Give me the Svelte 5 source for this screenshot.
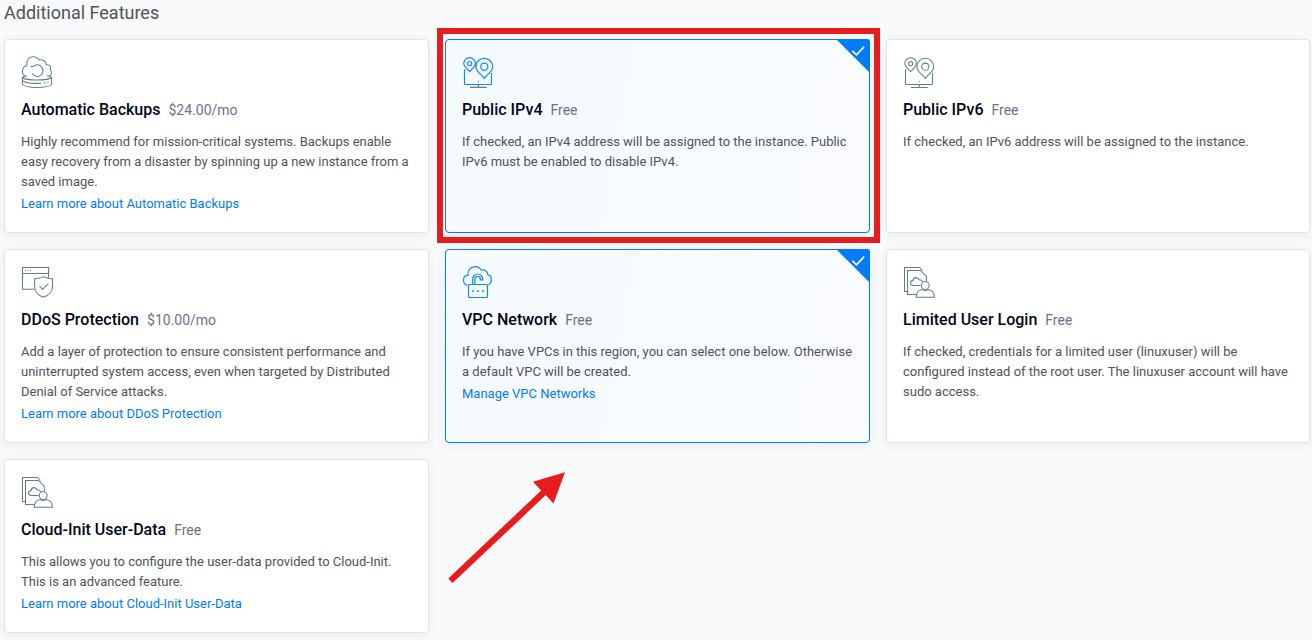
<script>
  const features = [
    { icon: 'backup', title: 'Automatic Backups', price: '$24.00/mo', lines: ['Highly recommend for mission-critical systems. Backups enable', 'easy recovery from a disaster by spinning up a new instance from a', 'saved image.'], link: 'Learn more about Automatic Backups' },
    { icon: 'pins', title: 'Public IPv4', price: 'Free', lines: ['If checked, an IPv4 address will be assigned to the instance. Public', 'IPv6 must be enabled to disable IPv4.'], selected: true, marked: true },
    { icon: 'pins', title: 'Public IPv6', price: 'Free', lines: ['If checked, an IPv6 address will be assigned to the instance.'] },
    { icon: 'shield', title: 'DDoS Protection', price: '$10.00/mo', lines: ['Add a layer of protection to ensure consistent performance and', 'uninterrupted system access, even when targeted by Distributed', 'Denial of Service attacks.'], link: 'Learn more about DDoS Protection' },
    { icon: 'lock', title: 'VPC Network', price: 'Free', lines: ['If you have VPCs in this region, you can select one below. Otherwise', 'a default VPC will be created.'], link: 'Manage VPC Networks', selected: true },
    { icon: 'user', title: 'Limited User Login', price: 'Free', lines: ['If checked, credentials for a limited user (linuxuser) will be', 'configured instead of the root user. The linuxuser account will have', 'sudo access.'] },
    { icon: 'user', title: 'Cloud-Init User-Data', price: 'Free', lines: ['This allows you to configure the user-data provided to Cloud-Init.', 'This is an advanced feature.'], link: 'Learn more about Cloud-Init User-Data' }
  ];
</script>

<main>
  <h2>Additional Features</h2>
  <div class="grid">
    {#each features as f}
      <section class="card" class:selected={f.selected}>
        <svg class="icon" viewBox="0 0 32 32">
          {#if f.icon === 'backup'}
            <path d="M4.6 20.4C2.4 19.2 1.2 17.3 1.5 14.6C1.8 12 3.4 10.2 5.8 9.8C5.2 4.4 7.8 .8 12 .7C14.8 .6 16.8 1.8 18 4.1C21.5 2.9 25 5 25.2 8.7C28.8 8.5 30.5 10.8 29.2 13.7C31.6 16.3 30.8 19.3 27.4 20.7M10.2 10.9L12 10.6A5.8 5.8 0 1 1 11.2 17.6M10.2 10.9V9.8" />
            <path d="M1.4 21.5C5 24.8 27 24.8 30.6 21.5V28.5C27 32.4 5 32.4 1.4 28.5ZM1.4 21.5C2.4 20.6 4 20.2 6 19.9M30.6 21.5C29.6 20.6 28 20.2 26 19.9M1.8 25C5.5 27.6 13 27.6 20 27.2" />
            <path d="M23 26.6h1.2M26.4 26h1.2" />
          {:else if f.icon === 'pins'}
            <path d="M7.6 15.6C5.9 13.2 1.8 11 1.8 7.5A5.8 5.8 0 0 1 13.4 7.5C13.4 11 9.3 13.2 7.6 15.6ZM22.3 22.4C20.1 18.8 13.9 15.8 13.9 10.7A8.4 8.4 0 0 1 30.7 10.7C30.7 15.8 24.5 18.8 22.3 22.4Z" />
            <circle cx="7.6" cy="7.6" r="2.1" /><circle cx="22.3" cy="10.7" r="3.6" />
            <path d="M2.5 13.2V27.5Q2.5 28.5 3.5 28.5H28.5Q29.5 28.5 29.5 27.5V17M15.8 25.4h1" />
            <path class="stand" d="M16.3 28.7V31.3M8 31.4H24.7" />
          {:else if f.icon === 'shield'}
            <path d="M13.5 23.3H1.5V1.5H27.6V11.7M1.5 7.5H27.6M4 4.5h1M6.5 4.5h1M9 4.5h1" />
            <path d="M22.4 10.6C20 12.1 17 12.5 13.6 12.7V20C13.6 26 17.5 29.6 22.4 31.3C27.4 29.6 31.5 26 31.5 20V12.7C28 12.5 24.8 12.1 22.4 10.6ZM18.5 20L21.5 23.4L27.4 17.5" />
          {:else if f.icon === 'lock'}
            <path d="M5.6 19.4C2.6 18.8 1.5 17 1.5 14.3C1.5 11.4 3.3 9.4 6 9.4C5.4 4.6 8.5 .7 13 .6C16.2 .5 18 2 19.4 4.2C22.6 3 25.5 5.1 25.8 8.6C28.2 9.2 29.5 11.1 29.3 14C29.2 16.5 28.4 18 26.5 19M10.7 18.3V13A5 5 0 0 1 20.7 13V13.8H18.3V13A2.7 2.7 0 0 0 12.9 13V18.3" />
            <rect x="6.5" y="18.5" width="19" height="13" rx="1" />
            <path class="dots" d="M10.2 25.1h1.6M15.2 25.1h1.6M20.2 25.1h1.6" />
          {:else}
            <path d="M4.4 25.5H1.5V1.5H16.5L19.5 4.5M13 28.4H4.5V4.5H17.5L23.4 10.4V15.3M17.5 4.5L19.2 6.2" />
            <path d="M17.5 19.4H10.5C8.5 19.4 7.5 18.4 7.5 17C7.5 15.6 8.5 14.6 10 14.6C10.2 12.6 11.4 11.6 13 11.6C14.8 11.6 15.7 12.4 16.2 13.9C18 13.6 19.2 14.3 19.6 16" />
            <circle cx="22.2" cy="19.4" r="3.9" />
            <path d="M13.2 31.3C13.2 26.3 16 24.1 19.2 23.5Q22.2 25.5 25.2 23.5C28.6 24.1 31.4 26.3 31.4 31.3Z" />
          {/if}
        </svg>
        <div class="heading"><h3>{f.title}</h3><span>{f.price}</span></div>
        <p>{#each f.lines as line, i}{#if i}<br />{/if}{line}{/each}</p>
        {#if f.link}<a href="#more">{f.link}</a>{/if}
        {#if f.selected}
          <svg class="corner" viewBox="0 0 34 34"><path d="M0 0H31Q34 0 34 3V34Z" fill="#007bfc" /><path d="M16.3 11.8L20.5 15.9L28.2 7.7" fill="none" stroke="#fff" stroke-width="1.7" /></svg>
        {/if}
        {#if f.marked}<div class="mark"></div>{/if}
      </section>
    {/each}
  </div>
  <svg class="arrow" viewBox="440 460 140 130"><path d="M565 472.3L553.5 503.5L545.7 495.1L452.5 583L448.3 578.5L541.2 490.4L533 481.8Z" fill="#e81b1d" /></svg>
</main>

<style>
  :global(body) { background: #f9fafc; }
  main { position: relative; box-sizing: border-box; width: 1312px; height: 640px; overflow: hidden; padding: 0 2px 0 4px; font-family: Roboto, sans-serif; color: #505357; }
  h2 { margin: 0; height: 39px; line-height: 25px; font-size: 18px; font-weight: 400; }
  .grid { display: grid; grid-template-columns: 425px 425px 424px; grid-template-rows: 194px 194px 174px; gap: 16px; }
  .card { position: relative; box-sizing: border-box; padding: 16px; border: 1px solid #e1e3e6; border-radius: 4px; background: #fff; box-shadow: 0 2px 12px rgba(30, 45, 70, .07); }
  .card.selected { border-color: #007bfc; background: linear-gradient(100deg, #f5faff, #fafcff); }
  .icon { display: block; width: 32px; height: 32px; fill: none; stroke: #627d8a; stroke-width: 1.05; }
  .selected .icon { stroke: #1686fb; stroke-width: 1.2; }
  .selected .stand { stroke: #627d8a; }
  .selected .dots { stroke-width: 1.6; }
  .heading { display: flex; align-items: baseline; gap: 8px; height: 24px; margin: 10px 0; line-height: 24px; }
  h3 { margin: 0; font-size: 16px; font-weight: 500; color: #000618; }
  .heading span { font-size: 14px; color: #69718a; }
  p { margin: 0 0 2px; font-size: 13px; line-height: 20px; white-space: nowrap; }
  a { display: block; font-size: 13px; line-height: 20px; color: #007bfc; text-decoration: none; }
  .corner { position: absolute; top: -1px; right: -1px; width: 34px; height: 34px; }
  .mark { position: absolute; inset: -12px -11px -11px -9px; border: 6px solid #e81b1d; }
  .arrow { position: absolute; left: 440px; top: 460px; width: 140px; height: 130px; }
</style>
